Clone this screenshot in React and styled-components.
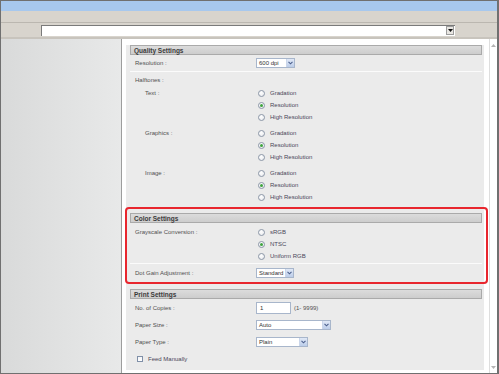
import styled, { createGlobalStyle } from 'styled-components';

const GlobalStyle = createGlobalStyle`
  html, body {
    margin: 0;
    padding: 0;
    background: #ffffff;
  }
  body {
    font-family: "Liberation Sans", Arial, sans-serif;
  }
`;

const halftones = [
  { name: 'Text :', value: 'Resolution' },
  { name: 'Graphics :', value: 'Resolution' },
  { name: 'Image :', value: 'Resolution' },
];

const halftoneModes = ['Gradation', 'Resolution', 'High Resolution'];
const grayscaleModes = ['sRGB', 'NTSC', 'Uniform RGB'];

function Chevron() {
  return (
    <svg width="5" height="4" viewBox="0 0 5 4">
      <path d="M0.5 0.8 L2.5 2.8 L4.5 0.8" fill="none" stroke="#4b5f8c" strokeWidth="1.1" />
    </svg>
  );
}

function Select({ value, width }) {
  return (
    <SelectBox width={width}>
      <SelectText>{value}</SelectText>
      <SelectArrow>
        <Chevron />
      </SelectArrow>
    </SelectBox>
  );
}

function RadioList({ options, selected }) {
  return (
    <Options>
      {options.map((o) => (
        <Option key={o}>
          <Radio checked={o === selected} />
          <OptionLabel>{o}</OptionLabel>
        </Option>
      ))}
    </Options>
  );
}

export default function App() {
  return (
    <>
      <GlobalStyle />
      <Window>
        <TitleBar />
        <Toolbar />
        <AddressRow>
          <AddressBox>
            <DropButton>
              <svg width="5" height="3" viewBox="0 0 5 3">
                <path d="M0 0 H5 L2.5 3 Z" fill="#111" />
              </svg>
            </DropButton>
          </AddressBox>
        </AddressRow>
        <Body>
          <LeftPane />
          <Main>
            <Content>
              <Panel>
                <Section>
                  <Header>Quality Settings</Header>
                  <Row height={17} divided>
                    <Label>Resolution :</Label>
                    <Select value="600 dpi" width={39} />
                  </Row>
                  <Row height={15}>
                    <Label>Halftones :</Label>
                  </Row>
                  <Groups>
                    {halftones.map((h) => (
                      <GroupRow key={h.name}>
                        <GroupLabel>{h.name}</GroupLabel>
                        <RadioList options={halftoneModes} selected={h.value} />
                      </GroupRow>
                    ))}
                  </Groups>
                </Section>

                <Section gapTop={7} highlighted>
                  <Header>Color Settings</Header>
                  <GroupRow divided padded>
                    <Label>Grayscale Conversion :</Label>
                    <RadioList options={grayscaleModes} selected="NTSC" />
                  </GroupRow>
                  <Row height={17}>
                    <Label>Dot Gain Adjustment :</Label>
                    <Select value="Standard" width={38} />
                  </Row>
                </Section>

                <Section gapTop={8}>
                  <Header>Print Settings</Header>
                  <Row height={17}>
                    <Label>No. of Copies :</Label>
                    <TextInput>1</TextInput>
                    <Hint>(1- 9999)</Hint>
                  </Row>
                  <Row height={17}>
                    <Label>Paper Size :</Label>
                    <Select value="Auto" width={75} />
                  </Row>
                  <Row height={17}>
                    <Label>Paper Type :</Label>
                    <Select value="Plain" width={52} />
                  </Row>
                  <Row height={17}>
                    <Checkbox />
                    <OptionLabel>Feed Manually</OptionLabel>
                  </Row>
                </Section>
              </Panel>
            </Content>
            <Scrollbar>
              <svg width="5" height="3" viewBox="0 0 5 3">
                <path d="M0 3 L2.5 0 L5 3 Z" fill="#b4b4b4" />
              </svg>
              <svg width="5" height="3" viewBox="0 0 5 3">
                <path d="M0 0 H5 L2.5 3 Z" fill="#b4b4b4" />
              </svg>
            </Scrollbar>
          </Main>
        </Body>
      </Window>
    </>
  );
}

const Window = styled.div`
  width: 499px;
  height: 374px;
  box-sizing: border-box;
  border: 1px solid #707070;
  border-right-width: 2px;
  display: flex;
  flex-direction: column;
  overflow: hidden;
  font-family: "Liberation Sans", Arial, sans-serif;
  font-size: 6px;
`;

const TitleBar = styled.div`
  height: 10px;
  background: #a7c8ee;
`;

const Toolbar = styled.div`
  height: 11px;
  background: #d8d4cd;
  border-bottom: 1px solid #bbb7b0;
`;

const AddressRow = styled.div`
  height: 14px;
  background: #d8d4cd;
  border-bottom: 2px solid #c8c4bd;
  display: flex;
  align-items: center;
  padding: 0 42px 0 40px;
`;

const AddressBox = styled.div`
  flex: 1;
  height: 11px;
  box-sizing: border-box;
  background: #ffffff;
  border-top: 1px solid #7a7a7a;
  border-left: 1px solid #7a7a7a;
  display: flex;
  align-items: center;
  justify-content: flex-end;
  padding-right: 1px;
`;

const DropButton = styled.div`
  width: 8px;
  height: 9px;
  box-sizing: border-box;
  background: #e8e6e2;
  border: 1px solid #9c9c9c;
  display: flex;
  align-items: center;
  justify-content: center;
`;

const Body = styled.div`
  flex: 1;
  min-height: 0;
  display: flex;
`;

const LeftPane = styled.div`
  width: 120px;
  background: linear-gradient(90deg, #d9dada, #e8e9e9);
  border-right: 1px solid #9d9d9d;
`;

const Main = styled.div`
  flex: 1;
  display: flex;
  background: #ffffff;
`;

const Content = styled.div`
  flex: 1;
  padding: 6px 5px 3px 4px;
  display: flex;
  flex-direction: column;
`;

const Scrollbar = styled.div`
  width: 7px;
  border-left: 1px solid #dedede;
  display: flex;
  flex-direction: column;
  justify-content: space-between;
  align-items: center;
  padding: 5px 0 4px;
`;

const Panel = styled.div`
  flex: 1;
  background: #ebebeb;
  padding: 0 2px 0 4px;
  display: flex;
  flex-direction: column;
`;

const Section = styled.section`
  position: relative;
  margin-top: ${({ gapTop }) => gapTop || 0}px;
  padding-bottom: ${({ highlighted }) => (highlighted ? 0 : 0)}px;

  &::before {
    content: '';
    display: ${({ highlighted }) => (highlighted ? 'block' : 'none')};
    position: absolute;
    top: -6px;
    left: -5px;
    right: -6px;
    bottom: -3px;
    border: 2px solid #e8262e;
    border-radius: 4px;
    pointer-events: none;
  }
`;

const Header = styled.div`
  height: 10px;
  box-sizing: border-box;
  border: 1px solid #aaaaaa;
  background: linear-gradient(#dcdcdc, #cdcdcd);
  font-size: 6.5px;
  font-weight: bold;
  color: #3b3b3b;
  padding-left: 3px;
  display: flex;
  align-items: center;
`;

const Row = styled.div`
  height: ${({ height }) => height}px;
  box-sizing: border-box;
  padding-left: 5px;
  display: flex;
  align-items: center;
  border-bottom: ${({ divided }) => (divided ? '1px solid #fbfbfb' : 'none')};
`;

const Label = styled.span`
  width: 121px;
  flex-shrink: 0;
  color: #505050;
  line-height: 12px;
`;

const Groups = styled.div`
  display: flex;
  flex-direction: column;
  gap: 4px;
  padding-bottom: 3px;
`;

const GroupRow = styled.div`
  display: flex;
  align-items: flex-start;
  padding-left: 5px;
  padding-top: ${({ padded }) => (padded ? 3 : 0)}px;
  padding-bottom: ${({ padded }) => (padded ? 1 : 0)}px;
  border-bottom: ${({ divided }) => (divided ? '1px solid #fbfbfb' : 'none')};
`;

const GroupLabel = styled(Label)`
  width: 111px;
  padding-left: 10px;
`;

const Options = styled.div`
  display: flex;
  flex-direction: column;
`;

const Option = styled.div`
  height: 12px;
  display: flex;
  align-items: center;
  padding-left: 2px;
`;

const Radio = styled.span`
  width: 7px;
  height: 7px;
  box-sizing: border-box;
  border-radius: 50%;
  border: 1px solid #8c97a7;
  background: radial-gradient(circle at 40% 35%, #ffffff, #e4e6ea);
  margin-right: 5px;
  display: flex;
  align-items: center;
  justify-content: center;

  &::after {
    content: '';
    display: ${({ checked }) => (checked ? 'block' : 'none')};
    width: 3px;
    height: 3px;
    border-radius: 50%;
    background: #3fa33f;
  }
`;

const OptionLabel = styled.span`
  color: #4a4659;
`;

const SelectBox = styled.div`
  width: ${({ width }) => width}px;
  height: 10px;
  box-sizing: border-box;
  border: 1px solid #a8b6cb;
  background: #ffffff;
  display: flex;
  align-items: center;
`;

const SelectText = styled.span`
  flex: 1;
  padding-left: 2px;
  color: #333333;
`;

const SelectArrow = styled.span`
  width: 8px;
  height: 100%;
  box-sizing: border-box;
  background: linear-gradient(#e0e8f6, #bccde9);
  border-left: 1px solid #cad6ea;
  display: flex;
  align-items: center;
  justify-content: center;
`;

const TextInput = styled.div`
  width: 35px;
  height: 12px;
  box-sizing: border-box;
  border: 1px solid #a8b6cb;
  background: #ffffff;
  padding-left: 3px;
  display: flex;
  align-items: center;
  color: #333333;
`;

const Hint = styled.span`
  margin-left: 3px;
  color: #505050;
`;

const Checkbox = styled.span`
  width: 6px;
  height: 6px;
  box-sizing: border-box;
  border: 1px solid #8090a8;
  background: linear-gradient(#f4f5f7, #ffffff);
  margin: 0 5px 0 2px;
`;
